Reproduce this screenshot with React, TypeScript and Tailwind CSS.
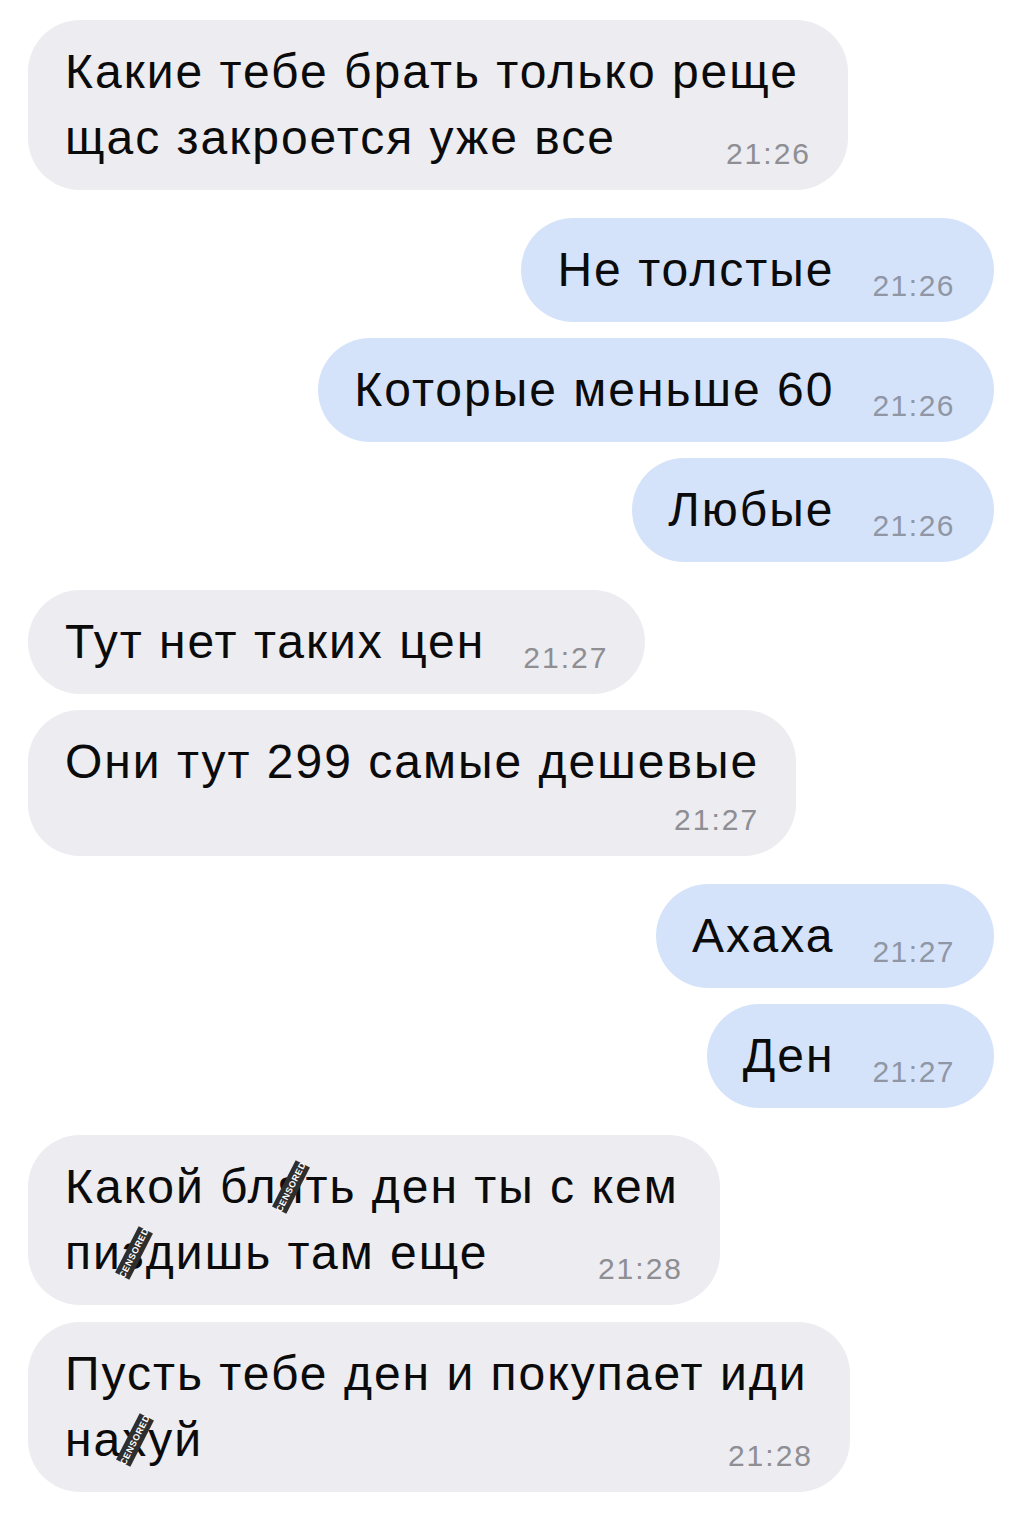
import React from "react";

const FONT = { fontFamily: '"Liberation Sans", Arial, sans-serif' };

function Time({ t, light }: { t: string; light?: boolean }) {
  return (
    <span
      className={
        "whitespace-nowrap text-[30px] leading-[34px] " +
        (light ? "tracking-[1.5px] text-[#8f97a6]" : "tracking-[2px] text-[#8e8e93]")
      }
    >
      {t}
    </span>
  );
}

function Censor({ ch }: { ch: string }) {
  return (
    <span className="relative inline-block">
      {ch}
      <span className="absolute left-1/2 top-1/2 -translate-x-1/2 -translate-y-1/2 -rotate-[63deg] flex h-[16px] w-[52px] items-center justify-center bg-[#2e2e2e] text-[9px] leading-none font-bold tracking-[0.5px] text-white">
        CENSORED
      </span>
    </span>
  );
}

function In({ children, className = "" }: { children: React.ReactNode; className?: string }) {
  return (
    <div
      className={
        "self-start rounded-[52px] bg-[#ececf1] px-[37px] py-[19px] text-[48px] leading-[66px] tracking-[2px] text-[#0b0b0b] " +
        className
      }
    >
      {children}
    </div>
  );
}

function Out({ children, className = "" }: { children: React.ReactNode; className?: string }) {
  return (
    <div
      className={
        "self-end rounded-[52px] bg-[#d5e3fa] py-[19px] pl-[36px] pr-[39px] text-[48px] leading-[66px] tracking-[2px] text-[#0b0b0b] " +
        className
      }
    >
      {children}
    </div>
  );
}

function Row({ text, t, light }: { text: React.ReactNode; t: string; light?: boolean }) {
  return (
    <div className="flex items-end justify-between gap-[38px]">
      <span className="whitespace-nowrap">{text}</span>
      <Time t={t} light={light} />
    </div>
  );
}

export default function App() {
  return (
    <div className="min-h-[1514px] w-[1014px] bg-white" style={FONT}>
      <div className="flex flex-col pl-[28px] pr-[20px] pt-[20px]">
        <In className="w-[820px]">
          <div className="whitespace-nowrap">Какие тебе брать только реще</div>
          <Row text="щас закроется уже все" t="21:26" />
        </In>

        <Out className="mt-[28px]">
          <Row text="Не толстые" t="21:26" light />
        </Out>
        <Out className="mt-[16px]">
          <Row text="Которые меньше 60" t="21:26" light />
        </Out>
        <Out className="mt-[16px]">
          <Row text="Любые" t="21:26" light />
        </Out>

        <In className="mt-[28px]">
          <Row text="Тут нет таких цен" t="21:27" />
        </In>
        <In className="mt-[16px]">
          <div className="whitespace-nowrap">Они тут 299 самые дешевые</div>
          <div className="mt-[8px] flex justify-end">
            <Time t="21:27" />
          </div>
        </In>

        <Out className="mt-[28px]">
          <Row text="Ахаха" t="21:27" light />
        </Out>
        <Out className="mt-[16px]">
          <Row text="Ден" t="21:27" light />
        </Out>

        <In className="mt-[27px] w-[692px]">
          <div className="whitespace-nowrap">
            Какой бл<Censor ch="я" />ть ден ты с кем
          </div>
          <Row
            text={
              <>
                пи<Censor ch="з" />дишь там еще
              </>
            }
            t="21:28"
          />
        </In>
        <In className="mt-[17px] w-[822px]">
          <div className="whitespace-nowrap">Пусть тебе ден и покупает иди</div>
          <Row
            text={
              <>
                на<Censor ch="х" />уй
              </>
            }
            t="21:28"
          />
        </In>
      </div>
    </div>
  );
}
